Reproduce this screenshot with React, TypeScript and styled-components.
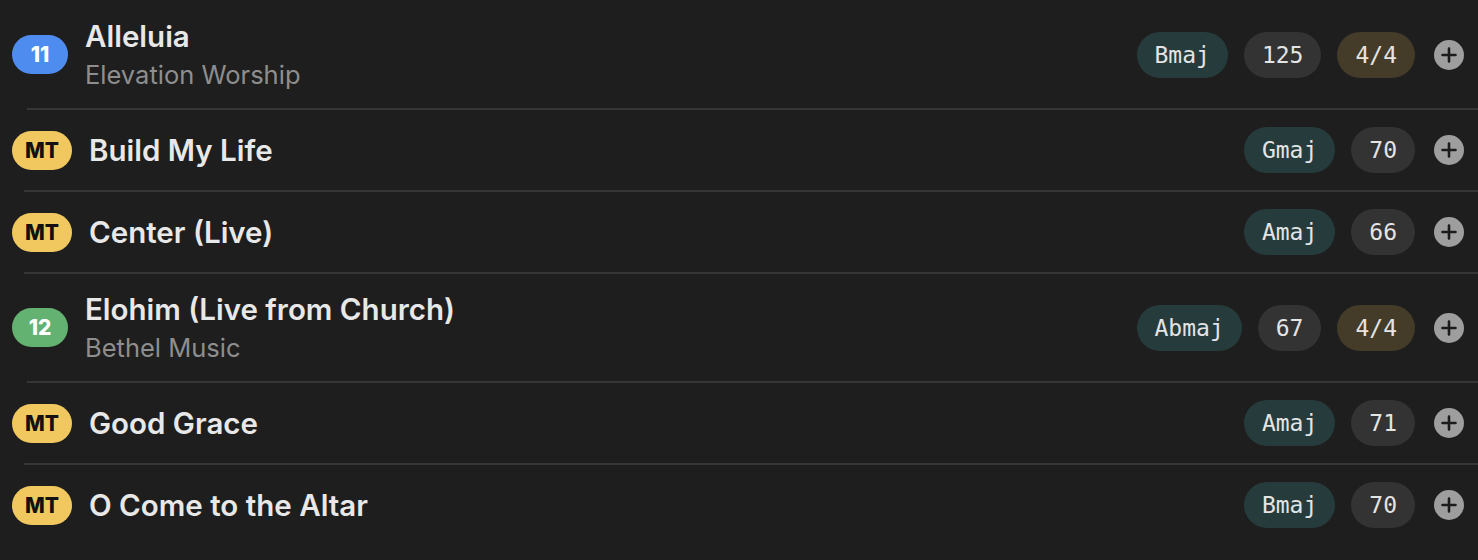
import React from 'react';
import styled, {createGlobalStyle} from 'styled-components';

const GlobalStyle = createGlobalStyle`
  html, body {
    margin: 0;
    padding: 0;
    background: #1e1e1e;
  }

  body {
    font-family: Inter, "Noto Sans", sans-serif;
    -webkit-font-smoothing: antialiased;
  }
`

const List = styled.div`
  width: 1478px;
  height: 560px;
  padding-top: 1px;
  box-sizing: border-box;
  background: #1e1e1e;
  display: flex;
  flex-direction: column;
`

const Row = styled.div<{ $tall?: boolean }>`
  height: ${props => props.$tall ? "107px" : "80px"};
  padding: 0 14px 0 12px;
  display: flex;
  align-items: center;
  flex-shrink: 0;
`

const Divider = styled.div<{ $inset: number }>`
  height: 2px;
  margin-left: ${props => props.$inset}px;
  background: #363636;
  flex-shrink: 0;
`

const Badge = styled.div<{ $color: string; $dark?: boolean }>`
  min-width: ${props => props.$dark ? "60px" : "56px"};
  height: 39px;
  border-radius: 20px;
  background: ${props => props.$color};
  color: ${props => props.$dark ? "#111111" : "#ffffff"};
  font-size: 21px;
  font-weight: 800;
  display: flex;
  justify-content: center;
  align-items: center;
  flex-shrink: 0;
`

const TextBlock = styled.div<{ $gap: number }>`
  margin-left: ${props => props.$gap}px;
  display: flex;
  flex-direction: column;
  flex: 1;
  min-width: 0;
`

const Title = styled.div`
  color: #e8e8e8;
  font-size: 29.5px;
  font-weight: 600;
  line-height: 38px;
`

const Subtitle = styled.div`
  color: #8e8e8e;
  font-size: 25.5px;
  font-weight: 400;
  line-height: 36px;
  margin-top: 2px;
`

const Meta = styled.div`
  display: flex;
  align-items: center;
  gap: 16px;
`

const Pill = styled.div<{ $tone: 'key' | 'bpm' | 'time' }>`
  height: 46px;
  min-width: 62px;
  box-sizing: border-box;
  padding: 0 18px;
  border-radius: 23px;
  background: ${props => props.$tone === 'key' ? '#263c3c' : props.$tone === 'time' ? '#443c29' : '#333333'};
  color: #e4e4e4;
  font-family: "DejaVu Sans Mono", "Liberation Mono", monospace;
  font-size: 23px;
  display: flex;
  justify-content: center;
  align-items: center;
`

const AddButton = styled.button`
  width: 30px;
  height: 30px;
  margin-left: 19px;
  padding: 0;
  border: none;
  border-radius: 50%;
  background: #9e9e9e;
  display: flex;
  justify-content: center;
  align-items: center;
  cursor: pointer;
`

type Song = {
    badge: string;
    title: string;
    artist?: string;
    keyName: string;
    bpm: string;
    time?: string;
};

const songs: Song[] = [
    {badge: '11', title: 'Alleluia', artist: 'Elevation Worship', keyName: 'Bmaj', bpm: '125', time: '4/4'},
    {badge: 'MT', title: 'Build My Life', keyName: 'Gmaj', bpm: '70'},
    {badge: 'MT', title: 'Center (Live)', keyName: 'Amaj', bpm: '66'},
    {badge: '12', title: 'Elohim (Live from Church)', artist: 'Bethel Music', keyName: 'Abmaj', bpm: '67', time: '4/4'},
    {badge: 'MT', title: 'Good Grace', keyName: 'Amaj', bpm: '71'},
    {badge: 'MT', title: 'O Come to the Altar', keyName: 'Bmaj', bpm: '70'},
];

const badgeColor = (badge: string) => {
    if (badge === 'MT') return '#f0c85f';
    if (badge === '12') return '#63b271';
    return '#4f8cef';
}

const PlusIcon = () => (
    <svg width="16" height="16" viewBox="0 0 16 16">
        <path d="M8 1.5v13M1.5 8h13" stroke="#1c1c1c" strokeWidth="2.6" strokeLinecap="round"/>
    </svg>
);

const App = () => {
    return (
        <>
            <GlobalStyle/>
            <List>
                {songs.map((song, i) => {
                    const mt = song.badge === 'MT';
                    return (
                        <React.Fragment key={song.title}>
                            <Row $tall={!!song.artist}>
                                <Badge $color={badgeColor(song.badge)} $dark={mt}>{song.badge}</Badge>
                                <TextBlock $gap={17}>
                                    <Title>{song.title}</Title>
                                    {song.artist ? <Subtitle>{song.artist}</Subtitle> : null}
                                </TextBlock>
                                <Meta>
                                    <Pill $tone="key">{song.keyName}</Pill>
                                    <Pill $tone="bpm">{song.bpm}</Pill>
                                    {song.time ? <Pill $tone="time">{song.time}</Pill> : null}
                                </Meta>
                                <AddButton aria-label="Add"><PlusIcon/></AddButton>
                            </Row>
                            {i < songs.length - 1 ? <Divider $inset={mt ? 24 : 27}/> : null}
                        </React.Fragment>
                    );
                })}
            </List>
        </>
    );
};

export default App;
